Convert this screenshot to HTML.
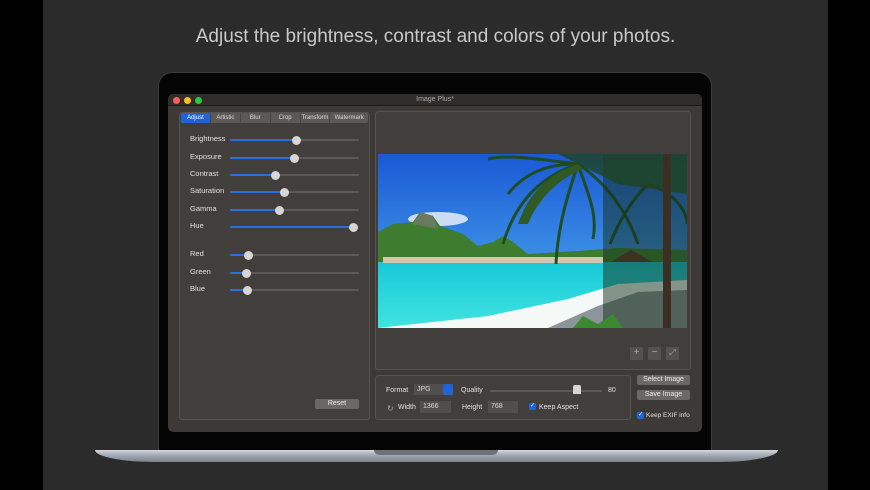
<!DOCTYPE html>
<html><head><meta charset="utf-8"><style>
*{margin:0;padding:0;box-sizing:border-box}
body{width:870px;height:490px;background:#000;position:relative;overflow:hidden;font-family:"Liberation Sans",sans-serif}
.a{position:absolute}
.bg{left:43px;top:0;width:785px;height:490px;background:#2b2b2b}
.title{left:43px;width:785px;top:26px;text-align:center;color:#c9c9c9;font-size:19px;font-weight:300}
.bezel{left:158px;top:72px;width:554px;height:380px;background:#050505;border-radius:14px 14px 0 0;border:1px solid #3a3a3a}
.base{left:95px;top:450px;width:683px;height:12px;background:linear-gradient(#d4d7dc,#a7adb6 40%,#7d838c);border-radius:0 0 60px 60px/0 0 12px 12px}
.notch{left:374px;top:450px;width:124px;height:5px;background:#6d7178;border-radius:0 0 6px 6px}
.win{left:168px;top:94px;width:534px;height:338px;background:#3d3936;border-radius:5px;overflow:hidden}
.tb{left:0;top:0;width:534px;height:12px;background:#2f2c2a;border-bottom:1px solid #1d1b1a;color:#aaa;font-size:7px;text-align:center;line-height:12px}
.dot{top:3px;width:7px;height:7px;border-radius:50%}
.panel{background:#423e3b;border:1px solid #57534f;border-radius:3px}
.tabs{left:13px;top:19px;width:187px;height:10px;background:#5c5855;border-radius:2px;display:flex;font-size:6px;color:#ddd}
.tabs div{flex:1;text-align:center;line-height:10px;border-left:1px solid #4a4643}
.tabs .on{background:#1f63d6;color:#fff;border:none;border-radius:2px 0 0 2px}
.lbl{color:#e2e2e2;font-size:7.5px}
.track{height:2px;background:#5d5956;border-radius:1px}
.fill{height:2px;background:#2a6fe0;border-radius:1px}
.knob{width:9px;height:9px;border-radius:50%;background:#d6d6d6;top:-4px}
.btn{background:#6b6764;color:#eee;font-size:7px;text-align:center;border-radius:2px}
.fld{background:#524e4b;color:#ddd;font-size:7px;padding-left:3px}
.cb{width:7px;height:7px;background:#1f63d6;border-radius:1.5px;color:#fff;font-size:6px;line-height:7px;text-align:center}
.ib{width:13px;height:13px;background:#55514e;color:#aaa;font-size:10px;text-align:center;line-height:12px;border-radius:1px}
</style></head><body>
<div class="a bg"></div>
<div class="a title">Adjust the brightness, contrast and colors of your photos.</div>
<div class="a bezel"></div>
<div class="a base"></div>
<div class="a notch"></div>
<div class="a win">
 <div class="a tb">Image Plus*</div>
 <div class="a dot" style="left:5px;background:#fc5f57"></div>
 <div class="a dot" style="left:16px;background:#fdbc2e"></div>
 <div class="a dot" style="left:27px;background:#29c840"></div>
 <div class="a panel" style="left:11px;top:18px;width:191px;height:308px"></div>
 <div class="a tabs"><div class="on">Adjust</div><div>Artistic</div><div>Blur</div><div>Crop</div><div>Transform</div><div style="flex:1.3">Watermark</div></div>
 <div class="a panel" style="left:207px;top:17px;width:316px;height:259px"></div>
 <div class="a panel" style="left:207px;top:281px;width:256px;height:45px"></div>
 <svg class="a" style="left:210px;top:60px" width="309" height="174" viewBox="0 0 309 174">
  <defs>
   <linearGradient id="sky" x1="0" y1="0" x2="0" y2="1"><stop offset="0" stop-color="#1a58d4"/><stop offset=".6" stop-color="#3b8fe6"/><stop offset="1" stop-color="#8cc6f0"/></linearGradient>
   <linearGradient id="sea" x1="0" y1="0" x2="0" y2="1"><stop offset="0" stop-color="#18c8d8"/><stop offset="1" stop-color="#3fe4e0"/></linearGradient>
  </defs>
  <rect width="309" height="174" fill="url(#sky)"/>
  <ellipse cx="60" cy="65" rx="30" ry="7" fill="#e6eef8" opacity=".85"/>
  <path d="M0 78 L15 70 L35 68 L42 58 L55 62 L62 72 L85 80 L100 92 L115 88 L125 82 L135 88 L150 100 L200 97 L240 94 L309 96 L309 110 L0 112Z" fill="#3e7c2f"/>
  <path d="M35 70 L42 58 L55 62 L60 75Z" fill="#6a7a60"/>
  <rect y="108" width="309" height="66" fill="url(#sea)"/>
  <rect x="5" y="103" width="220" height="6" fill="#d4c6b2"/>
  <path d="M0 174 L110 162 L190 145 L240 130 L309 126 L309 174Z" fill="#f4f8f6"/>
  <path d="M170 174 L220 152 L260 138 L309 136 L309 174Z" fill="#55606a" opacity=".65"/>
  <g stroke="#1f4a1c" stroke-width="3" fill="none" opacity=".95">
   <path d="M200 10 C170 20 140 40 125 90"/><path d="M200 10 C175 10 150 15 130 40"/>
   <path d="M200 10 C190 40 180 70 178 110"/><path d="M200 10 C230 30 250 60 260 90"/>
   <path d="M200 10 C160 5 130 0 110 5"/><path d="M200 10 C210 40 220 60 215 85"/>
   <path d="M270 30 C250 50 240 70 232 90"/><path d="M270 30 C300 40 309 60 309 70"/>
  </g>
  <path d="M200 10 C170 20 150 40 140 70 L150 70 C160 45 180 25 205 15Z" fill="#2f5a24"/>
  <rect x="225" y="0" width="84" height="174" fill="#14301a" opacity=".5"/>
  <path d="M180 0 L309 0 L309 40 L240 30Z" fill="#1f4420" opacity=".8"/>
  <rect x="285" y="0" width="8" height="174" fill="#3a2f22"/>
  <path d="M233 108 L253 96 L275 108Z" fill="#3d3024"/>
  <path d="M195 174 L205 162 L220 170 L235 160 L245 174Z" fill="#3b8a32"/>
 </svg>
 <div class="a ib" style="left:462px;top:253px">+</div>
 <div class="a ib" style="left:480px;top:253px">−</div>
 <div class="a ib" style="left:498px;top:253px;font-size:8px">⤢</div>
 <div class="a lbl" style="left:218px;top:293px;font-size:7px">Format</div>
 <div class="a fld" style="left:246px;top:290px;width:39px;height:11px;line-height:11px">JPG</div>
 <div class="a" style="left:275px;top:290px;width:10px;height:11px;background:#1f63d6;border-radius:2px"></div>
 <div class="a lbl" style="left:293px;top:293px;font-size:7px">Quality</div>
 <div class="a track" style="left:322px;top:296px;width:112px"></div>
 <div class="a" style="left:405px;top:291px;width:8px;height:9px;background:#d6d6d6;border-radius:2px 2px 0 0"></div>
 <div class="a lbl" style="left:440px;top:293px;font-size:7px">80</div>
 <div class="a lbl" style="left:219px;top:310px;font-size:8px;color:#aaa">↻</div>
 <div class="a lbl" style="left:230px;top:310px;font-size:7px">Width</div>
 <div class="a fld" style="left:252px;top:307px;width:31px;height:12px;line-height:12px">1366</div>
 <div class="a lbl" style="left:294px;top:310px;font-size:7px">Height</div>
 <div class="a fld" style="left:320px;top:307px;width:30px;height:12px;line-height:12px">768</div>
 <div class="a cb" style="left:361px;top:309px">✓</div>
 <div class="a lbl" style="left:371px;top:310px;font-size:7px">Keep Aspect</div>
 <div class="a btn" style="left:469px;top:281px;width:53px;height:10px;line-height:10px">Select Image</div>
 <div class="a btn" style="left:469px;top:296px;width:53px;height:10px;line-height:10px">Save Image</div>
 <div class="a cb" style="left:469px;top:318px">✓</div>
 <div class="a lbl" style="left:478px;top:318px;font-size:6.5px">Keep EXIF info</div>
 <div class="a btn" style="left:147px;top:305px;width:44px;height:10px;line-height:10px">Reset</div>
</div>
<div id="s"></div>
<script>
var rows=[["Brightness",139,296],["Exposure",157,294],["Contrast",174,275],["Saturation",191,284],["Gamma",209,279],["Hue",226,353],["Red",254,248],["Green",272,246],["Blue",289,247]];
var h="";rows.forEach(function(r){
h+='<div class="a lbl" style="left:190px;top:'+(r[1]-5)+'px">'+r[0]+'</div>';
h+='<div class="a track" style="left:230px;top:'+r[1]+'px;width:129px"></div>';
h+='<div class="a fill" style="left:230px;top:'+r[1]+'px;width:'+(r[2]-230)+'px"></div>';
h+='<div class="a knob" style="left:'+(r[2]-4.5)+'px;top:'+(r[1]-3.5)+'px"></div>';});
document.getElementById("s").innerHTML=h;
</script>
</body></html>
